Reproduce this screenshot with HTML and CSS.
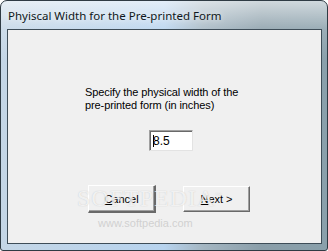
FILE: index.html
```html
<html>
<head>
    <title>
        Physical Width
    </title>
    <link rel="stylesheet" href="styles.css">
</head>

<body>
<div class="window">
    <div class="titlebar">
        <span class="title">Phyiscal Width for the Pre-printed Form</span>
    </div>
    <div class="client">
        <div class="prompt">
            Specify the physical width of the<br>
            pre-printed form (in inches)
        </div>
        <div class="field-row">
            <div class="textbox"><span class="caret"></span>8.5</div>
        </div>
        <div class="buttons">
            <div class="button default"><u>C</u>ancel</div>
            <div class="button"><u>N</u>ext &gt;</div>
        </div>

        <!-- watermark sits over the dialog -->
        <div class="mark-big">SOFTPEDIA<sup>&trade;</sup></div>
        <div class="mark-url">www.softpedia.com</div>
    </div>
</div>
</body>
</html>
```

FILE: styles.css
```css
body {
    margin: 0;
    background-color: white;
}

.window {
    width: 328px;
    height: 251px;
    box-sizing: border-box;
    border: 1px solid #2f3b44;
    border-radius: 7px 7px 3px 3px;
    padding: 0 5px 6px 6px;
    display: flex;
    flex-direction: column;
    background:
        linear-gradient(to bottom, rgba(255, 255, 255, 0.6) 0px, rgba(255, 255, 255, 0.15) 28px, rgba(255, 255, 255, 0) 60px),
        linear-gradient(to right, #c4d6e6 0%, #b7d3ee 50%, #a4b6c2 62%, #8a9ea9 80%, #8aa0ab 100%);
}

.titlebar {
    height: 28px;
    display: flex;
    align-items: center;
    padding-left: 1px;
    flex-shrink: 0;
}

.title {
    font-family: "Noto Sans", "Open Sans", sans-serif;
    font-size: 11.5px;
    color: #101820;
    text-shadow: 0 0 6px rgba(255, 255, 255, 0.9);
    padding-top: 1px;
}

.client {
    position: relative;
    flex: 1;
    background-color: #f0f0f0;
    border: 1px solid #3e4d58;
    font-family: "Liberation Sans", Arial, sans-serif;
    font-size: 11px;
    color: black;
    overflow: hidden;
}

.prompt {
    margin: 56px 0 0 77px;
    line-height: 13px;
    letter-spacing: -0.1px;
}

.field-row {
    margin: 18px 0 0 141px;
}

.textbox {
    width: 44px;
    height: 21px;
    box-sizing: border-box;
    background: white;
    border-top: 1px solid #a0a0a0;
    border-left: 1px solid #a0a0a0;
    border-right: 1px solid #e3e3e3;
    border-bottom: 1px solid #e3e3e3;
    box-shadow: inset 1px 1px 0 #696969;
    padding: 4px 0 0 3px;
    line-height: 12px;
    font-size: 12px;
    position: relative;
}

.caret {
    position: absolute;
    left: 3px;
    top: 4px;
    width: 1px;
    height: 12px;
    background: black;
}

.buttons {
    display: flex;
    align-items: center;
    margin: 34px 0 0 80px;
    gap: 27px;
}

.button {
    width: 67px;
    height: 26px;
    box-sizing: border-box;
    display: flex;
    align-items: center;
    justify-content: center;
    background: #f0f0f0;
    border-top: 1px solid #ffffff;
    border-left: 1px solid #ffffff;
    border-right: 1px solid #696969;
    border-bottom: 1px solid #696969;
    box-shadow: inset -1px -1px 0 #a0a0a0;
}

.button.default {
    width: 68px;
    height: 28px;
    border-right: 2px solid #696969;
    border-bottom: 2px solid #696969;
}

.mark-big {
    position: absolute;
    left: 69px;
    top: 155px;
    font-family: "Liberation Serif", serif;
    font-size: 24px;
    letter-spacing: 1px;
    color: rgba(255, 255, 255, 0.75);
    text-shadow: 0 0 1px rgba(150, 150, 150, 0.5);
}

.mark-big sup {
    font-size: 6px;
}

.mark-url {
    position: absolute;
    left: 90px;
    top: 187px;
    font-family: "Liberation Sans", Arial, sans-serif;
    font-size: 11px;
    color: rgba(200, 200, 200, 0.8);
}
```
